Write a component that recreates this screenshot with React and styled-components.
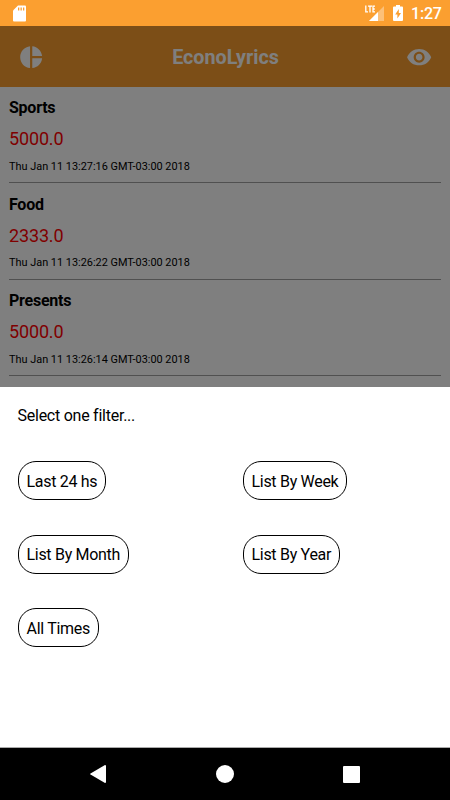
import styled, { createGlobalStyle } from "styled-components"

const GlobalStyle = createGlobalStyle`
    * { box-sizing: border-box; }
    body {
        margin: 0;
        background: #fff;
        font-family: Roboto, "Liberation Sans", sans-serif;
    }
`;

const Screen = styled.div`
    width: 450px;
    height: 800px;
    display: flex;
    flex-direction: column;
    overflow: hidden;
    background: #fff;
`;

const StatusBar = styled.div`
    height: 26px;
    flex: none;
    display: flex;
    align-items: center;
    justify-content: space-between;
    padding: 0 9px 0 13px;
    background: #fb9f30;
    color: #fff;
`;

const StatusGroup = styled.div`
    display: flex;
    align-items: center;
    gap: 8px;
`;

const Clock = styled.span`
    width: 30px;
    padding-top: 2px;
    font-size: 16px;
    line-height: 24px;
    font-weight: 500;
    letter-spacing: -0.2px;
    white-space: nowrap;
`;

const Dimmed = styled.div`
    position: relative;
    flex: none;
    height: 361px;
    overflow: hidden;
    &::after {
        content: "";
        position: absolute;
        inset: 0;
        background: rgba(0, 0, 0, 0.5);
    }
`;

const Header = styled.header`
    height: 61px;
    display: flex;
    align-items: center;
    justify-content: space-between;
    padding: 1px 17.5px 0 17.5px;
    background: #f99d2e;
    color: #fff;
`;

const Title = styled.h1`
    margin: 0;
    padding: 2px 0 0 1px;
    font-size: 19.7px;
    line-height: 26px;
    font-weight: 700;
`;

const List = styled.div`
    padding: 0 9px;
`;

const Entry = styled.div`
    height: 96.4px;
    padding-top: 11.3px;
    border-bottom: 1px solid #a0a0a0;
`;

const Category = styled.div`
    font-size: 16px;
    line-height: 20px;
    font-weight: 700;
    letter-spacing: -0.25px;
    color: #000;
`;

const Amount = styled.div`
    margin-top: 9px;
    font-size: 18px;
    line-height: 24px;
    letter-spacing: -0.15px;
    color: #ff0000;
`;

const EntryDate = styled.div`
    margin-top: 8.7px;
    font-size: 10.9px;
    line-height: 14px;
    color: #000;
`;

const Sheet = styled.div`
    flex: 1;
    padding: 18px 0 0 17.5px;
    border-bottom: 1px solid #aaa;
`;

const SheetTitle = styled.div`
    font-size: 16px;
    line-height: 22px;
    letter-spacing: -0.25px;
    color: #000;
`;

const Filters = styled.div`
    margin-top: 34px;
    display: grid;
    grid-template-columns: 225px 1fr;
    row-gap: 34.7px;
    justify-items: start;
`;

const FilterButton = styled.button`
    height: 39px;
    padding: 2px 8px 0;
    border: 1px solid #000;
    border-radius: 18px;
    background: #fff;
    color: #000;
    font-family: inherit;
    font-size: 16px;
    line-height: 20px;
    letter-spacing: -0.3px;
`;

const NavBar = styled.div`
    height: 52px;
    flex: none;
    display: flex;
    align-items: center;
    justify-content: space-between;
    padding: 0 90px;
    background: #000;
`;

const entries = [
  { category: "Sports", amount: "5000.0", date: "Thu Jan 11 13:27:16 GMT-03:00 2018" },
  { category: "Food", amount: "2333.0", date: "Thu Jan 11 13:26:22 GMT-03:00 2018" },
  { category: "Presents", amount: "5000.0", date: "Thu Jan 11 13:26:14 GMT-03:00 2018" },
];

const filters = ["Last 24 hs", "List By Week", "List By Month", "List By Year", "All Times"];

const SdCard = () => (
  <svg width="13" height="17" viewBox="0 0 13 17">
    <path fill="#fff" d="M5 .5h7a1 1 0 0 1 1 1v14a1 1 0 0 1-1 1H1a1 1 0 0 1-1-1v-10z" />
    <path fill="#fb9f30" d="M5 2.500h1.300v3H5zM7.500 2.500h1.300v3H7.500zM10 2.500h1.300v3H10z" />
  </svg>
);

const Signal = () => (
  <svg width="20" height="18" viewBox="0 0 20 18">
    <path fill="#fff" opacity=".35" d="M19 2v15H4z" />
    <path fill="#fff" d="M13 8v9H4z" />
    <path fill="none" stroke="#fff" strokeWidth="1.3" d="M.8 1.500v6.400H3M3 2.100h4M5 2.100v6.400M10 2.100H8v5.800h2M8 5h1.800" />
  </svg>
);

const Battery = () => (
  <svg width="10" height="16" viewBox="0 0 10 16">
    <path fill="#fff" d="M3 0h4v1.500h2a1 1 0 0 1 1 1V15a1 1 0 0 1-1 1H1a1 1 0 0 1-1-1V2.500a1 1 0 0 1 1-1h2z" />
    <path fill="#fb9f30" d="M5.800 4v4H8l-3.600 5.500V9.500H2.200z" />
  </svg>
);

const Pie = () => (
  <svg width="26.3" height="26.3" viewBox="0 0 24 24" fill="#fff">
    <path d="M11 2v20c-5.070-.5-9-4.790-9-10s3.930-9.500 9-10zm2.030 0v8.990H22c-.470-4.740-4.240-8.520-8.970-8.990zm0 11.010V22c4.740-.470 8.500-4.250 8.970-8.990h-8.970z" />
  </svg>
);

const Eye = () => (
  <svg width="26.3" height="26.3" viewBox="0 0 24 24" fill="#fff">
    <path d="M12 4.500C7 4.500 2.730 7.610 1 12c1.730 4.390 6 7.500 11 7.500s9.270-3.110 11-7.500c-1.730-4.390-6-7.500-11-7.500zM12 17c-2.760 0-5-2.240-5-5s2.240-5 5-5 5 2.240 5 5-2.240 5-5 5zm0-8c-1.660 0-3 1.340-3 3s1.340 3 3 3 3-1.340 3-3-1.340-3-3-3z" />
  </svg>
);

const App = () => {
  return (
    <Screen>
      <GlobalStyle />
      <StatusBar>
        <SdCard />
        <StatusGroup>
          <Signal />
          <Battery />
          <Clock>1:27</Clock>
        </StatusGroup>
      </StatusBar>
      <Dimmed>
        <Header>
          <Pie />
          <Title>EconoLyrics</Title>
          <Eye />
        </Header>
        <List>
          {entries.map((entry) => (
            <Entry key={entry.category}>
              <Category>{entry.category}</Category>
              <Amount>{entry.amount}</Amount>
              <EntryDate>{entry.date}</EntryDate>
            </Entry>
          ))}
        </List>
      </Dimmed>
      <Sheet>
        <SheetTitle>Select one filter...</SheetTitle>
        <Filters>
          {filters.map((label) => (
            <FilterButton key={label}>{label}</FilterButton>
          ))}
        </Filters>
      </Sheet>
      <NavBar>
        <svg width="16" height="18" viewBox="0 0 16 18">
          <path fill="#fff" d="M15 0q1 0 1 1v16q0 1-1 1L.5 9.600q-.7-.6 0-1.200z" />
        </svg>
        <svg width="18" height="18" viewBox="0 0 18 18">
          <circle cx="9" cy="9" r="9" fill="#fff" />
        </svg>
        <svg width="17" height="17" viewBox="0 0 17 17">
          <rect width="17" height="17" rx="1" fill="#fff" />
        </svg>
      </NavBar>
    </Screen>
  )
}

export default App
